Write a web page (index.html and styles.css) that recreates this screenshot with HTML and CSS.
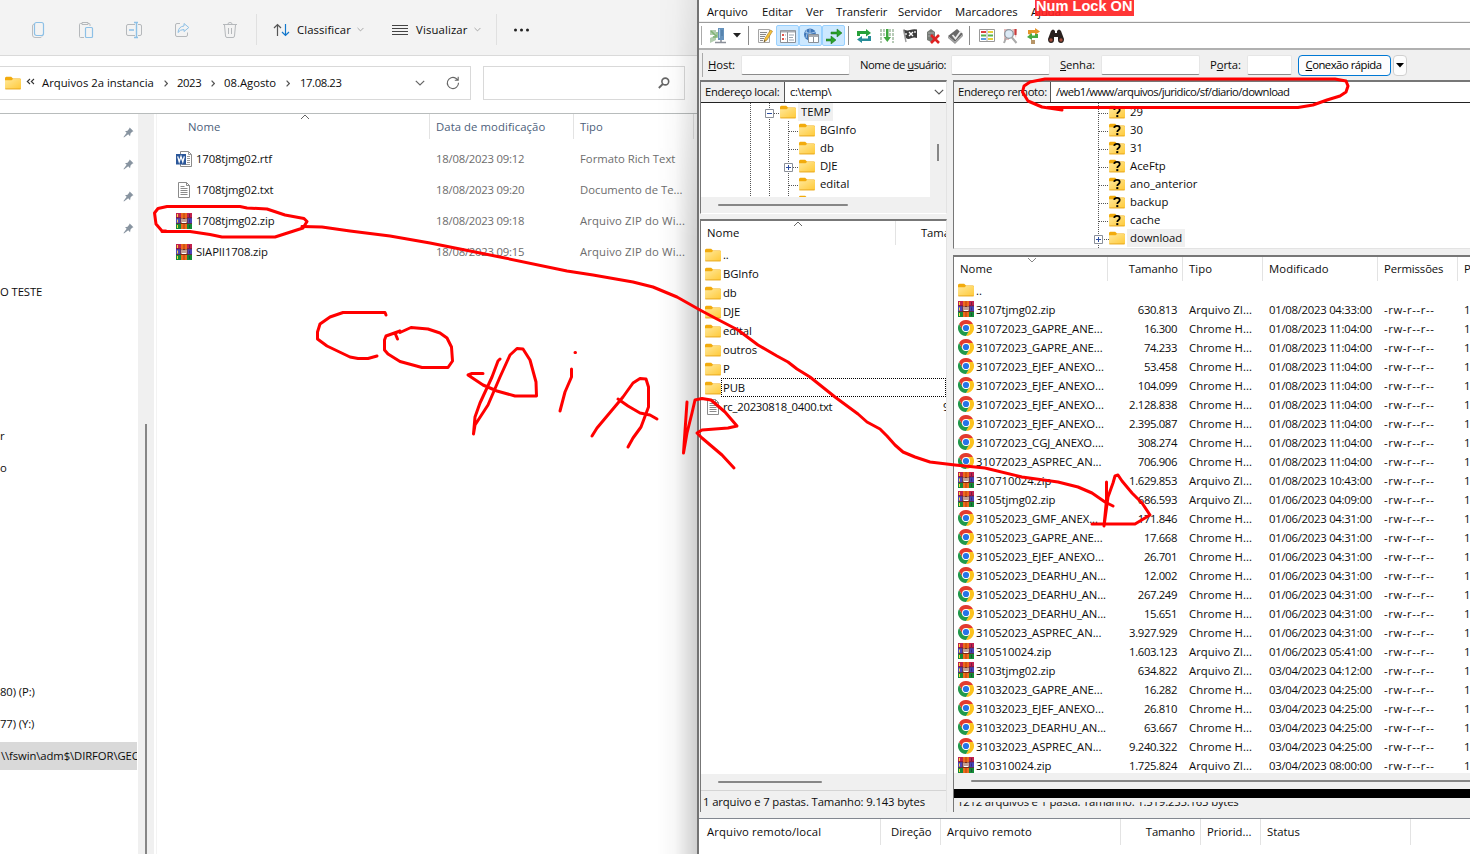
FILE: index.html
```
<!DOCTYPE html>
<html lang="pt-BR">
<head>
<meta charset="utf-8">
<title>Arquivos</title>
<link rel="stylesheet" href="styles.css">
</head>
<body>
<svg class="defs" width="0" height="0">
  <defs>
    <linearGradient id="gold" x1="0" y1="0" x2="1" y2="1"><stop offset="0" stop-color="#ffe89a"/><stop offset="1" stop-color="#ffc937"/></linearGradient>
  </defs>
  <symbol id="folder" viewBox="0 0 16 14"><path d="M0 2.2Q0 .7 1.3.7h4.9L8 2.5h6.8Q16 2.5 16 3.7V8H0z" fill="#f2ab0d"/><path d="M0 4.3h6.6L8 3h7q1 0 1 1v8.3q0 1-1 1H1q-1 0-1-1z" fill="url(#gold)"/><path d="M.3 12.9h15.4" stroke="#e3a21a" stroke-width=".8"/></symbol>
  <symbol id="qfolder" viewBox="0 0 16 14"><use href="#folder"/><path d="M5.2 4.9Q5.4 2.9 8 2.9q2.7 0 2.7 2.2Q10.700 6.400 9.300 7.200Q8.300 7.800 8.300 9" fill="none" stroke="#000" stroke-width="1.800"/><rect x="7.300" y="10.100" width="2" height="2"/></symbol>
  <symbol id="zip" viewBox="0 0 16 16"><path fill="#c2214d" d="M0 0h16v5H0z"/><path fill="#4a44b8" d="M0 5h16v5.500H0z"/><path fill="#148a36" d="M0 10.500h16V16H0z"/><path fill="#5e1230" d="M0 4.500h16v.8H0zM0 10h16v.8H0z"/><path fill="#ee6a1c" d="M5 0h6v16H5z"/><path fill="#b5400c" d="M7.500 0h1v16h-1z"/><path fill="#7c2b12" d="M4.500 5h7v6h-7z"/><path d="M6 5.500v4h4v-4M8 6v3.500" stroke="#fff" fill="none" stroke-width="1.100"/><path d="M1.500 1v3M1.500 6.500v3M1.500 12v3" stroke="#f7d73e"/><path d="M13.500 1v3M13.500 6.500v3M13.500 12v3" stroke="#242038" opacity=".5"/></symbol>
  <symbol id="chrome" viewBox="0 0 16 16"><path d="M1.070 4A8 8 0 0 1 14.930 4H8z" fill="#e33b2e"/><path d="M14.930 4A8 8 0 0 1 8 16L11.460 10 8 4z" fill="#fcc31e"/><path d="M1.070 4 4.540 10 8 8l0-4z" fill="#e33b2e"/><path d="M1.070 4 4.540 10 8 12 11 11 8 16A8 8 0 0 1 1.070 4z" fill="#219a4b"/><circle cx="8" cy="8" r="4" fill="#fff"/><circle cx="8" cy="8" r="3.100" fill="#2474e8"/></symbol>
  <symbol id="txt" viewBox="0 0 16 16"><path d="M2.500.5h8l3 3v12h-11z" fill="#fff" stroke="#8b8b8b"/><path d="M10.500.5v3h3M4.500 4.500h4M4.500 6.500h7M4.500 8.500h7M4.500 10.500h7M4.500 12.500h7" fill="none" stroke="#8b8b8b"/></symbol>
  <symbol id="word" viewBox="0 0 16 16"><path d="M4.500.5h8l3 3v12h-11z" fill="#fff" stroke="#8b8b8b"/><path d="M12.500.5v3h3M11 5.500h3M11 7.500h3M11 9.500h3M11 11.500h3M6 13.500h8" fill="none" stroke="#9a9a9a"/><path d="M0 3h10v10.500H0z" fill="#2b579a"/><path d="m1.700 5.300 1.500 5.500L5 5.500l1.800 5.300L8.300 5.300" stroke="#fff" stroke-width="1.300" fill="none"/></symbol>
  <symbol id="pin" viewBox="0 0 12 12"><path d="M7.300.6 11.400 4.700 10 5.300 8.200 7.200 7.700 10 5.700 8 1 11.500.6 11 4 6.400 2.200 4.500 5 4 6.700 2z" fill="#8894a0"/></symbol>
  <symbol id="chev" viewBox="0 0 10 6"><path d="M.8.8 5 5 9.200.8" fill="none" stroke="currentColor" stroke-width="1.200"/></symbol>
  <symbol id="crumb" viewBox="0 0 4 7"><path d="M.6.6 3.300 3.500.6 6.400" fill="none" stroke="#555" stroke-width="1.200"/></symbol>
</svg>

<div class="desktop">
  <section class="explorer">
    <div class="ribbon">
      <div class="ribbon-icons">
        <svg width="18" height="18" viewBox="0 0 18 18" fill="none"><path d="M4 3Q2.500 3.500 2.500 5v9q0 2.500 2.500 2.500h5q1.500 0 2-1" stroke="#b9bcc0"/><rect x="4.500" y="1.500" width="9" height="13" rx="2" stroke="#8dc0e6" stroke-width="1.200"/></svg>
        <svg width="18" height="18" viewBox="0 0 18 18" fill="none"><path d="M7 16.500H3.500q-1 0-1-1v-12q0-1 1-1H5m6 0h1q1 0 1 1V5M5 1.500h6v2H5z" stroke="#b5b8bb"/><rect x="8.500" y="6.500" width="7" height="10" rx="1" stroke="#8dc0e6" stroke-width="1.200"/></svg>
        <svg width="18" height="18" viewBox="0 0 18 18" fill="none"><path d="M10 3.500H3Q1.500 3.500 1.500 5v8q0 1.500 1.500 1.500h7m3-11h2q1.500 0 1.500 1.500v8q0 1.500-1.500 1.500h-2" stroke="#b5b8bb"/><path d="M9 1.500h4M9 16.500h4M11.500 1.500v15M4 9h5" stroke="#8dc0e6" stroke-width="1.400"/></svg>
        <svg width="18" height="18" viewBox="0 0 18 18" fill="none"><path d="M7 2.500H4Q2.500 2.500 2.500 4v10q0 1.500 1.500 1.500h9q1.500 0 1.500-1.500v-2.500" stroke="#b5b8bb"/><path d="M11 2.500 15.800 6.500 11 10.500V8.500Q7 8.500 5 11.500 5.500 5.500 11 5z" stroke="#8dc0e6"/></svg>
        <svg width="18" height="18" viewBox="0 0 18 18" fill="none" stroke="#b5b8bb"><path d="M2 3.500h14M7 3q0-1.500 2-1.500T11 3M3.500 4l1 11q.2 1.500 1.500 1.500h6q1.300 0 1.500-1.500l1-11M7.500 7v6M10.500 7v6"/></svg>
      </div>
      <div class="ribbon-sort">
        <svg width="17" height="14" viewBox="0 0 17 14" fill="none" stroke-width="1.200"><path d="M1 5 4.500 1.500 8 5M4.500 1.500V13" stroke="#555"/><path d="M9 9l3.500 3.500L16 9M12.500 1v11.500" stroke="#1277cc"/></svg>
        <span>Classificar</span><svg class="dim" width="7" height="5"><use href="#chev"/></svg>
      </div>
      <div class="ribbon-view">
        <svg width="16" height="12" stroke="#444"><path d="M0 1.500h16M0 4.500h16M0 7.500h16M0 10.500h16"/></svg>
        <span>Visualizar</span><svg class="dim" width="7" height="5"><use href="#chev"/></svg>
      </div>
      <div class="ribbon-more"><svg width="18" height="4" fill="#222"><circle cx="2.500" cy="2" r="1.500"/><circle cx="8.500" cy="2" r="1.500"/><circle cx="14.500" cy="2" r="1.500"/></svg></div>
    </div>
    <div class="locbar">
      <div class="crumbs">
        <svg width="16" height="14"><use href="#folder"/></svg>
        <svg class="back" width="9" height="7" fill="none" stroke="#333" stroke-width="1.100"><path d="M4 1 1.300 3.500 4 6M8 1 5.300 3.500 8 6"/></svg>
        <span class="c1">Arquivos 2a instancia</span><svg width="4" height="7"><use href="#crumb"/></svg>
        <span class="c2">2023</span><svg width="4" height="7"><use href="#crumb"/></svg>
        <span class="c3">08.Agosto</span><svg width="4" height="7"><use href="#crumb"/></svg>
        <span class="c4">17.08.23</span>
        <svg class="drop" width="10" height="6"><use href="#chev"/></svg>
        <svg width="14" height="14" fill="none" stroke="#666" stroke-width="1.100"><path d="M12.500 6.800A5.600 5.600 0 1 1 9.800 2.200L12 4M12.200.8V4.200H8.800"/></svg>
      </div>
      <div class="search"><svg width="12" height="12" fill="none" stroke="#666"><circle cx="7.300" cy="4.500" r="3.400" stroke-width="1.600"/><path d="M4.800 7 .8 11" stroke-width="1.800"/></svg></div>
    </div>
    <div class="exp-body">
      <nav class="nav">
        <div class="pins"><svg width="11" height="11"><use href="#pin"/></svg><svg width="11" height="11"><use href="#pin"/></svg><svg width="11" height="11"><use href="#pin"/></svg><svg width="11" height="11"><use href="#pin"/></svg></div>
        <div class="nav-item n1">O TESTE</div>
        <div class="nav-item n2">r</div>
        <div class="nav-item n3">o</div>
        <div class="nav-item n4">80) (P:)</div>
        <div class="nav-item n5">77) (Y:)</div>
        <div class="nav-item n6">\\fswin\adm$\DIRFOR\GEOPE</div>
      </nav>
      <div class="nav-scroll"><i></i></div>
      <div class="files">
        <div class="frow fhead"><span>Nome</span><span>Data de modificação</span><span>Tipo</span><svg class="sort" width="10" height="6"><path d="M1 5 5 1 9 5" fill="none" stroke="#666"/></svg></div>
        <div class="frow"><span><svg width="16" height="16"><use href="#word"/></svg>1708tjmg02.rtf</span><span>18/08/2023 09:12</span><span>Formato Rich Text</span></div>
        <div class="frow"><span><svg width="16" height="16"><use href="#txt"/></svg>1708tjmg02.txt</span><span>18/08/2023 09:20</span><span>Documento de Te...</span></div>
        <div class="frow"><span><svg width="16" height="16"><use href="#zip"/></svg>1708tjmg02.zip</span><span>18/08/2023 09:18</span><span class="wide">Arquivo ZIP do Wi...</span></div>
        <div class="frow"><span><svg width="16" height="16"><use href="#zip"/></svg>SIAPII1708.zip</span><span>18/08/2023 09:15</span><span class="wide">Arquivo ZIP do Wi...</span></div>
      </div>
    </div>
    <div class="edge-shade"></div>
  </section>

  <section class="fz">
    <div class="menu"><span class="m1">Arquivo</span><span class="m2">Editar</span><span class="m3">Ver</span><span class="m4">Transferir</span><span class="m5">Servidor</span><span class="m6">Marcadores</span><span class="m7">Ajuda</span></div>
    <div class="tools">
      <i class="sep grip"></i>
      <svg class="server" width="18" height="18"><path d="M1 3h6v5H1zM1 11l6-3v5l-6 3z" fill="#b3cdb0"/><path d="m2 4 5 5M8 5v5H4" stroke="#7fb374" fill="none" stroke-width="1.500"/><path d="M9 1h6v12H9z" fill="#6693bd"/><path d="M10.500 2v9" stroke="#a9c8e3"/><path d="M13 3v6" stroke="#46749f"/><path d="M6 15.500h11M12 13v2" stroke="#8a8f98" stroke-width="1.600"/></svg>
      <svg class="caret" width="8" height="5"><path d="M0 0h8L4 4.500z" fill="#222"/></svg>
      <i class="sep s1"></i>
      <span class="tool"><svg width="16" height="16"><path d="M1.500 1.500h11v13h-11z" fill="#fafafa" stroke="#a5a5a5"/><path d="M3 4.500h7M3 6.500h6M3 8.500h5M3 10.500h4M3 12.500h3" stroke="#888"/><path d="m7 14 .8-3.500L13.500 2l2 1.300L10 12z" fill="#f5c23a" stroke="#a8781e" stroke-width=".6"/><path d="m7 14 .5-2 1 .7z" fill="#333"/></svg></span>
      <span class="tool on"><svg width="16" height="16"><path d="M.5 2.500h15v12H.5z" fill="#fff" stroke="#8a9097"/><path d="M1 3.500h14" stroke="#a7acb2" stroke-width="2"/><path d="M7.500 4v10" stroke="#8a9097"/><path d="M2 7h2M2 11h2" stroke="#e0564a" stroke-width="2"/><path d="M5 7h1M5 11h1M9 7h5M9 9.500h4M9 12h5" stroke="#9aa5b0"/></svg></span>
      <span class="tool on"><svg width="16" height="16"><circle cx="7" cy="6.500" r="6" fill="#3f77ba"/><path d="M2 4q5 3 10 0M7 1v6M3 2q2 3 0 8" stroke="#a3c4e6" fill="none"/><path d="M5.500 6.500h10v8h-10z" fill="#fff" stroke="#8a9097"/><path d="M6 8h9" stroke="#a7acb2" stroke-width="2"/><path d="M10.500 9v5" stroke="#8a9097"/></svg></span>
      <span class="tool on"><svg width="16" height="16"><path d="M5 4h6V1l5 4-5 4V6H5zM0 11h5V8l5 4-5 4v-3H0z" fill="#2ba32b" stroke="#186d1a" stroke-width=".5"/></svg></span>
      <i class="sep s2"></i>
      <span class="tool"><svg width="16" height="16"><path d="M1 8V3h9V1l5 4-5 3.500V6H4v2z" fill="#27a03a"/><path d="M15 8v5H6v2l-5-3.500L6 8v2.500h6V8z" fill="#268c98"/></svg></span>
      <span class="tool"><svg width="16" height="16"><path d="M2 1v14M5 1v8M11 1v8M14 1v14" stroke="#b7cbb7" stroke-width="2" stroke-dasharray="3 1"/><path d="M7 1h2.500v8H12l-3.700 5L4.500 9H7z" fill="#40a840"/></svg></span>
      <span class="tool"><svg width="16" height="16"><path d="M1.500 1.500 4 14" stroke="#999" stroke-width="1.400"/><path d="M2 1.500q3 1.500 6 .5t7-.5V10q-3-1-6 .3T4 10z" fill="#3c3c3c"/><path d="m7 4 4 4m0-4L7 8" stroke="#fff" stroke-width="1.400"/><path d="M13 3v2M4 5v2" stroke="#ddd" stroke-width="1.500"/></svg></span>
      <span class="tool"><svg width="16" height="16"><path d="M2 4 6 1l4 3v9l-4 1-4-2z" fill="#767b76"/><path d="M3 5h6M3 8h6" stroke="#aaa"/><path d="m6 7 8 8m0-8-8 8" stroke="#df2222" stroke-width="2.600"/></svg></span>
      <span class="tool"><svg width="16" height="16"><path d="M0 8 9 1l6 5-8 8z" fill="#686868"/><path d="m0 8 7 6 8-8v2l-8 8-7-6z" fill="#9b9b9b"/><path d="m4.500 7 3 3.500L13 3" stroke="#e9e9e9" stroke-width="1.800" fill="none"/></svg></span>
      <i class="sep s3"></i>
      <span class="tool"><svg width="16" height="16"><path d="M.5 1.500h15v12H.5z" fill="#fff" stroke="#999"/><path d="M2 4h5" stroke="#df4040" stroke-width="2"/><path d="M2 7.500h5M9 7.500h5" stroke="#58b04e" stroke-width="2"/><path d="M2 11h5" stroke="#5c9de0" stroke-width="2"/><path d="M9 4h5M9 11h5" stroke="#e5cf38" stroke-width="2"/><path d="M8 2v11" stroke="#aaa"/></svg></span>
      <span class="tool"><svg width="16" height="16"><path d="M2 1h5v11H2zM10 1h5l-1 9z" fill="#e6bcbc"/><circle cx="7" cy="6" r="4.300" fill="#dce9f5" stroke="#8d979f" stroke-width="1.300"/><path d="m9.500 9 5 6M4 10l-2 5" stroke="#aaa" stroke-width="2"/><path d="M13.500 1v6" stroke="#c93a3a" stroke-width="2"/></svg></span>
      <span class="tool"><svg width="16" height="16"><path d="M3 6V2h7V0l5 3.500L10 7V5H6v2z" fill="#e59429"/><path d="M13 6v4H7v2L2 9l5-4v2.500h3V6z" fill="#48aa42"/><path d="M6 12h4v4H6z" fill="#b79568"/></svg></span>
      <span class="tool"><svg width="16" height="16"><path d="M3 3q2-3 4 0v2h2V3q2-3 4 0l3 8q0 4-3 4t-3-3V9H6v3q0 3-3 3t-3-4z" fill="#29211f"/><circle cx="3" cy="12" r="1.700" fill="#a34c3a"/><circle cx="13" cy="12" r="1.700" fill="#a34c3a"/></svg></span>
    </div>
    <div class="quick">
      <i class="sep"></i>
      <label class="q1"><u>H</u>ost:</label><i class="inp i1"></i>
      <label class="q2">Nome de <u>u</u>suário:</label><i class="inp i2"></i>
      <label class="q3"><u>S</u>enha:</label><i class="inp i3"></i>
      <label class="q4">P<u>o</u>rta:</label><i class="inp i4"></i>
      <button class="connect"><u>C</u>onexão rápida</button><button class="arrow"><svg width="8" height="5"><path d="M0 0h8L4 4.500z"/></svg></button>
    </div>
    <div class="panes">
      <div class="side local">
        <div class="box tree-box">
          <div class="addr"><span class="lab">Endereço local:</span><span class="path">c:\temp\</span><svg width="10" height="6"><use href="#chev"/></svg></div>
          <div class="tree" id="local-tree">
            <svg class="guides" width="230" height="93" fill="none" stroke="#555" stroke-dasharray="1 1"><path d="M49.500 0v93M68.500 0v93M87.500 18v75M73 10.500h7M88 28.500h10M88 46.500h10M88 64.500h10M88 82.500h10"/><g stroke-dasharray="none" stroke="#8a8f98"><path fill="#fff" d="M64.500 6.500h8v8h-8zM83.500 60.500h8v8h-8z"/><path stroke="#2b4ca0" d="M66 10.500h5M85 64.500h5M87.500 62v5"/></g></svg>
          </div>
          <div class="vscroll"><i></i></div>
          <div class="hscroll"><i></i></div>
        </div>
        <div class="box list-box">
          <div class="lhead"><span>Nome</span><span>Tamanho</span><svg class="sort" width="10" height="6"><path d="M1 5 5 1 9 5" fill="none" stroke="#666"/></svg></div>
          <div class="llist" id="local-list"></div>
          <div class="hscroll"><i></i></div>
          <div class="status">1 arquivo e 7 pastas. Tamanho: 9.143 bytes</div>
        </div>
      </div>
      <div class="side remote">
        <div class="box tree-box">
          <div class="addr"><span class="lab">Endereço remoto:</span><span class="path">/web1/www/arquivos/juridico/sf/diario/download</span></div>
          <div class="tree" id="remote-tree">
            <svg class="guides" width="230" height="145" fill="none" stroke="#555" stroke-dasharray="1 1"><path d="M144.500 0v145M145 10.500h10M145 28.500h10M145 46.500h10M145 64.500h10M145 82.500h10M145 100.500h10M145 118.500h10M150 136.500h6"/><g stroke-dasharray="none" stroke="#8a8f98"><path fill="#fff" d="M140.500 132.500h8v8h-8z"/><path stroke="#2b4ca0" d="M142 136.500h5M144.500 134v5"/></g></svg>
          </div>
        </div>
        <div class="box list-box">
          <div class="rrow rhead"><span>Nome</span><span>Tamanho</span><span>Tipo</span><span>Modificado</span><span>Permissões</span><span>P</span><svg class="sort" width="10" height="6"><path d="M1 1 5 5 9 1" fill="none" stroke="#888"/></svg></div>
          <div id="remote-list" class="rlist"></div>
          <div class="hscroll"><i></i></div>
          <div class="blackbar"></div>
          <div class="status"><span>1212 arquivos e 1 pasta. Tamanho: 1.519.255.165 bytes</span></div>
        </div>
      </div>
    </div>
    <div class="queue"><span>Arquivo remoto/local</span><span>Direção</span><span>Arquivo remoto</span><span>Tamanho</span><span>Priorid...</span><span>Status</span></div>
  </section>
  <div class="numlock">Num Lock ON</div>
  <svg class="ink" width="1470" height="854" viewBox="0 0 1470 854">
    <path d="M166 231H162L156 224 154.500 213 158 208.500 167 206.500H240L247 208 267 209 285 215 304 218.500 307 221.500 303 228 275 237H222L210 234.500 190 231.500H162"/>
    <path d="M302 226.500 322 227 350 231 390 236 430 243 500 257 567 271 593 275 633 282 653 287 677 297 700 310 715 318 738 330 758 345 777 356 788 362 797 369 810 377 835 397 858 414 867 422 880 429 887 436 895 445 903 452 915 457 930 462 955 465 985 468 1022 477 1058 482 1078 487 1092 493 1105 502 1113 506"/>
    <path d="M1106.500 482V500L1104 526 1108 497 1113 483 1115 476 1118 475 1122 481 1132 493 1142 503 1150 515 1135 524H1092"/>
    <path d="M386 315 385 312.500H343L330 317 320 324 317.500 332V339L327 346 350 357 358 358.500H368L377 356"/>
    <path d="M397.500 339 395 333 400 331 386 336 384.500 340V350L388 354 400 361.500 422 367.500H448L452.500 361 451.500 347 447 338 440 333 428 329 411 327.500 400 332.500"/>
    <path d="M500 359 498 361 492 377 480 403 475 417 473.500 434 475 425 488 405 500 377 510 355 517 348.500 523 349 530 360 536 382 536.500 396H515L497 391 483 385 468 375 472 373.500H483"/>
    <path d="M575 352.500h.5M571.500 369V377L565 392 560 411M592 436 597 428 623 397 633 383 640 378.500 646 379 648.500 387V407L641 427 633 438 628 447M618 399 628 406 640 413 650 415 657 419M687 402 683.500 453 687 433 692 413 695 400 702 398.500 711 400 725 412 737 426 728 428 702 430 697 433 702 438 722 455 734 468"/>
    <path d="M1062 110 1042 107 1028 101 1022.500 92 1024 86 1030 82 1045 79H1335L1346 81 1348 86 1346 92 1340 96 1327 100 1313 105 1298 107.500H1048"/>
  </svg>
</div>
<script src="lists.js"></script>
</body>
</html>
```
FILE: styles.css
```
* { box-sizing: border-box; }
body { margin: 0; font: 11.3px/18px "Open Sans", "Noto Sans", sans-serif; color: #0c0c0c; overflow: hidden; }
svg { display: block; flex: none; }
span, label { white-space: nowrap; }
.defs { position: absolute; }
.desktop { position: relative; display: flex; width: 1470px; height: 854px; overflow: hidden; }

/* Explorer window */
.explorer { position: relative; width: 697px; flex: none; background: #fff; display: flex; flex-direction: column; overflow: hidden; }
.ribbon { height: 56px; background: #f3f3f3; border-bottom: 1px solid #dadada; display: flex; align-items: center; padding: 4px 0 0 30px; }
.ribbon-icons { display: flex; gap: 30px; width: 227px; height: 31px; align-items: center; border-right: 1px solid #e0e0e0; }
.ribbon-icons svg:first-child { margin-right: -1px; }
.ribbon-sort, .ribbon-view { display: flex; align-items: center; }
.ribbon-sort { padding-left: 16px; width: 135px; }
.ribbon-sort span { margin-left: 7px; width: 60px; letter-spacing: .1px; }
.ribbon-view { width: 105px; height: 31px; border-right: 1px solid #e0e0e0; }
.ribbon-view span { margin-left: 8px; width: 58px; letter-spacing: .15px; }
.dim { color: #999; }
.ribbon-more { margin-left: 16px; }
.locbar { height: 58px; padding-top: 10px; display: flex; gap: 12px; border-bottom: 1px solid #b8bcbc; }
.crumbs { width: 471px; height: 34px; border: 1px solid #d9d9d9; border-left: 0; display: flex; align-items: center; padding-left: 5px; }
.crumbs .back { margin: 0 7px 3px 5px; }
.c1 { width: 122px; }
.c2 { width: 34px; margin-left: 9px; letter-spacing: -.4px; }
.c3 { width: 62px; margin-left: 9px; }
.c4 { width: 115px; margin-left: 10px; letter-spacing: -.4px; }
.drop { margin-right: 21px; color: #666; }
.search { width: 202px; height: 34px; border: 1px solid #d9d9d9; display: flex; align-items: center; justify-content: flex-end; padding-right: 14px; }
.exp-body { flex: 1; display: flex; }
.nav { width: 138px; position: relative; letter-spacing: -.1px; }
.pins { display: flex; flex-direction: column; gap: 21px; padding: 13px 0 0 123px; height: 160px; }
.nav-item { height: 28px; line-height: 28px; width: 137px; overflow: hidden; white-space: nowrap; }
.n1 { margin-top: 4px; }
.n2 { margin-top: 116px; }
.n3 { margin-top: 4px; }
.n4 { margin-top: 196px; }
.n5, .n6 { margin-top: 4px; }
.n6 { background: #d9d9d9; padding-left: 1px; }
.nav-scroll { width: 19px; background: linear-gradient(90deg, #f0f0f0 16px, #fff 16px, #fff 18px, #f3f3f3 18px); padding: 310px 0 0 7px; }
.nav-scroll i { display: block; width: 2px; height: 430px; background: #868686; }
.files { flex: 1; }
.frow { display: grid; grid-template-columns: 272px 144px 1fr; height: 31px; align-items: center; }
.frow span { color: #6d6d6d; padding-left: 7px; letter-spacing: -.22px; }
.frow span:first-child { color: #111; display: flex; align-items: center; gap: 4px; padding-left: 19px; letter-spacing: -.12px; }
.frow span:nth-child(3) { letter-spacing: 0; }
.frow span.wide { letter-spacing: .15px; }
.frow.fhead { height: 25px; margin-bottom: 4px; position: relative; grid-template-columns: 273px 144px 120px; }
.fhead span, .frow.fhead span:first-child { color: #4c607a; height: 25px; line-height: 26px; border-right: 1px solid #e3e3e3; letter-spacing: .1px; padding-left: 6px; }
.frow.fhead span:nth-child(2) { letter-spacing: .08px; }
.frow.fhead span:first-child { padding-left: 31px; }
.sort { position: absolute; top: 0; }
.fhead .sort { left: 143px; }
.edge-shade { position: absolute; right: 0; top: 0; bottom: 0; width: 40px; background: linear-gradient(90deg, rgba(0,0,0,0), rgba(0,0,0,.03) 45%, rgba(0,0,0,.19)); -webkit-mask-image: linear-gradient(rgba(0,0,0,.35), #000 240px); mask-image: linear-gradient(rgba(0,0,0,.35), #000 240px); }

/* FTP client window */
.fz { flex: 1; background: #f0f0f0; border-left: 2px solid #737373; display: flex; flex-direction: column; overflow: hidden; }
.fz > div { flex: none; }
.menu { height: 21px; background: #fff; display: flex; padding: 2px 0 0 8px; line-height: 20px; }
.m1 { width: 55px; } .m2 { width: 44px; } .m3 { width: 30px; } .m4 { width: 62px; } .m5 { width: 57px; } .m6 { width: 76px; }
.menu span { letter-spacing: -.02px; }
.tools { height: 28px; margin-top: 1px; background: #fff; border-top: 1px solid #9c9c9c; border-bottom: 2px solid #b0b0b0; display: flex; align-items: center; }
.sep { width: 1px; height: 19px; background: #8b8b8b; flex: none; }
.grip { margin-left: 2px; background: #aaa; }
.server { margin-left: 7px; }
.caret { margin-left: 6px; }
.s1 { margin: 0 4px 0 7px; }
.s2 { margin: 0 3px 0 3px; }
.s3 { margin: 0 5px 0 2px; }
.tool { width: 23px; height: 21px; display: flex; align-items: center; justify-content: center; flex: none; }
.tool.on { background: #cce8ff; border: 1px solid #99d1ff; border-radius: 2px; }
.quick { height: 30px; display: flex; align-items: center; padding-left: 3px; }
.quick .sep { height: 24px; background: #aaa; }
.inp { height: 20px; background: #fff; border: 1px solid #e6e6e6; border-bottom-color: #8b8b8b; border-radius: 2px; flex: none; }
.q1 { margin-left: 5px; width: 33px; } .i1 { width: 109px; }
.q2 { margin-left: 10px; width: 91px; } .i2 { width: 99px; }
.q3 { margin-left: 10px; width: 41px; } .i3 { width: 99px; }
.q4 { margin-left: 10px; width: 37px; } .i4 { width: 45px; }
.quick label { flex: none; letter-spacing: -.12px; }
.quick .q2 { letter-spacing: -.5px; }
.quick button { font: inherit; color: #000; background: #fdfdfd; height: 21px; padding: 0; border: 1px solid #d0d0d0; border-radius: 4px; display: flex; align-items: center; justify-content: center; white-space: pre; }
.quick .connect { width: 93px; margin-left: 6px; border-color: #0078d4; letter-spacing: -.5px; padding-right: 2px; }
.quick .arrow { width: 14px; margin-left: 2px; }
.panes { height: 732px; display: flex; gap: 6px; padding-left: 1px; }
.side { display: flex; flex-direction: column; flex: none; overflow: hidden; }
.local { width: 247px; }
.remote { width: 518px; }
.box { border-top: 2px solid #777; border-left: 1px solid #777; border-right: 1px solid #e3e3e3; position: relative; overflow: hidden; }
.addr { height: 21px; background: #fff; border-bottom: 1px solid #222; display: flex; align-items: center; }
.lab { background: #f0f0f0; border-right: 1px solid #555; height: 20px; line-height: 20px; padding-left: 4px; width: 84px; letter-spacing: -.36px; }
.path { padding-left: 5px; flex: 1; letter-spacing: -.4px; }
.addr svg { margin-right: 2px; color: #555; }
.local .tree-box { height: 134px; display: grid; grid-template: 21px 94px 1fr / 229px 1fr; margin-bottom: 5px; border-bottom: 1px solid #fff; }
.local .addr { grid-column: 1 / 3; }
.tree { position: relative; background: #fff; overflow: hidden; }
.guides { position: absolute; left: 0; top: 0; }
.titem { height: 18px; display: flex; align-items: center; position: relative; }
.titem span { padding: 0 3px; margin-left: 2px; }
.titem.sel span { background: #f0f0f0; }
.vscroll i { display: block; width: 2px; height: 17px; margin: 41px 0 0 7px; background: #868686; }
.local .tree-box .hscroll { grid-column: 1 / 3; }
.hscroll { height: 16px; padding: 7px 0 0 17px; background: #f0f0f0; }
.hscroll i { display: block; height: 2px; width: 130px; background: #868686; border-radius: 1px; }
.local .list-box { flex: 1; display: flex; flex-direction: column; }
.lhead { height: 24px; background: #fff; display: flex; position: relative; line-height: 23px; flex: none; }
.lhead span { width: 195px; padding-left: 6px; border-right: 1px solid #e3e3e3; flex: none; letter-spacing: .1px; }
.lhead span + span { padding-left: 25px; letter-spacing: -.1px; }
.lhead .sort { left: 92px; }
.llist { background: #fff; flex: 1; }
.lrow { height: 19px; display: flex; align-items: center; padding-left: 4px; }
.lrow span { flex: 1; padding: 1px 0 0 2px; line-height: 18px; letter-spacing: -.1px; }
.lrow:last-child span { letter-spacing: -.25px; }
.lrow.focus span { outline: 1px dotted #000; outline-offset: -1px; }
.lrow b { font-weight: 400; width: 3px; overflow: hidden; padding-top: 1px; }
.list-box .hscroll { flex: none; }
.local .list-box .hscroll i { width: 104px; }
.status { height: 22px; border-top: 1px solid #d4d4d4; padding: 2px 0 0 2px; flex: none; white-space: nowrap; letter-spacing: -.12px; }
.remote .tree-box { height: 169px; margin-bottom: 6px; background: #fff; border-bottom: 1px solid #e3e3e3; }
.remote .lab { width: 97px; }
.remote .path { letter-spacing: -.58px; }
.remote .tree { height: 145px; }
.remote .list-box { flex: 1; background: #fff; }
.rlist { height: 492px; overflow: hidden; }
.rrow { height: 19px; display: grid; grid-template-columns: 154px 75px 80px 115px 80px 20px; align-items: center; width: 524px; }
.rrow span { padding: 1px 0 0 6px; letter-spacing: -.25px; }
.rrow span:first-child { display: flex; align-items: center; gap: 2px; padding-left: 4px; letter-spacing: -.06px; }
.rlist svg { margin-top: -2px; }
.rrow span:nth-child(2) { text-align: right; padding-right: 6px; letter-spacing: -.36px; }
.rrow span:nth-child(3) { letter-spacing: .05px; }
.rrow span:nth-child(5) { letter-spacing: .6px; }
.rrow.rhead { height: 24px; position: relative; }
.rrow.rhead span { height: 24px; line-height: 23px; padding-top: 0; border-right: 1px solid #e3e3e3; letter-spacing: .1px; }
.rrow.rhead span:nth-child(2) { padding-right: 4px; letter-spacing: -.1px; }
.rrow.rhead span:nth-child(5) { letter-spacing: -.1px; }
.rrow.rhead span:first-child { display: block; padding-left: 6px; }
.rhead .sort { left: 73px; }
.remote .hscroll i { width: 520px; }
.blackbar { height: 9px; background: #000; }
.remote .status { background: #f0f0f0; height: 14px; padding: 4px 0 0 3px; border: 0; letter-spacing: -.18px; }
.remote .status span { display: block; height: 10px; overflow: hidden; line-height: 0; }
.queue { margin-top: 6px; height: 36px; background: #fff; border-top: 1px solid #828790; display: flex; }
.queue span { height: 26px; line-height: 25px; border-right: 1px solid #e3e3e3; padding: 0 6px 0 8px; width: 182px; flex: none; letter-spacing: .15px; }
.queue span:nth-child(2) { width: 60px; padding: 0 9px 0 10px; letter-spacing: 0; }
.queue span:nth-child(3) { width: 180px; padding-left: 6px; }
.queue span:nth-child(4) { width: 80px; text-align: right; padding-right: 5px; letter-spacing: -.1px; }
.queue span:nth-child(5) { width: 60px; padding: 0 6px; letter-spacing: 0; }
.queue span:nth-child(6) { width: 150px; padding-left: 6px; letter-spacing: 0; }

/* Overlays */
.numlock { position: absolute; left: 1035px; top: 0; width: 99px; height: 16px; background: rgba(255,32,32,.9); color: #fff; font: bold 14.6px/12px "Liberation Sans", sans-serif; padding-left: 1px; white-space: nowrap; }
.ink { position: absolute; left: 0; top: 0; fill: none; stroke: #f00; stroke-width: 3; stroke-linecap: round; stroke-linejoin: round; }
```
FILE: lists.js
```
const icon = (name, h = 16) => `<svg width="16" height="${h}"><use href="#${name}"/></svg>`;

const tree = (id, items) => {
  document.getElementById(id).insertAdjacentHTML('beforeend', items.map(([name, pad, ic, sel]) =>
    `<div class="titem${sel ? ' sel' : ''}" style="padding-left:${pad}px">${icon(ic, 14)}<span>${name}</span></div>`).join(''));
};

tree('local-tree', [
  ['TEMP', 79, 'folder', true], ['BGInfo', 98, 'folder'], ['db', 98, 'folder'],
  ['DJE', 98, 'folder'], ['edital', 98, 'folder'], ['', 98, 'folder']
]);
tree('remote-tree', [
  ['29', 155, 'qfolder'], ['30', 155, 'qfolder'], ['31', 155, 'qfolder'], ['AceFtp', 155, 'qfolder'],
  ['ano_anterior', 155, 'qfolder'], ['backup', 155, 'qfolder'], ['cache', 155, 'qfolder'], ['download', 155, 'folder', true]
]);

document.getElementById('local-list').innerHTML =
  ['..', 'BGInfo', 'db', 'DJE', 'edital', 'outros', 'P', 'PUB'].map(n =>
    `<div class="lrow${n === 'PUB' ? ' focus' : ''}">${icon('folder', 14)}<span>${n}</span></div>`).join('') +
  `<div class="lrow">${icon('txt')}<span>rc_20230818_0400.txt</span><b>9</b></div>`;

const remote = [
  ['3107tjmg02.zip', '630.813', '01/08/2023 04:33:00'],
  ['31072023_GAPRE_ANE...', '16.300', '01/08/2023 11:04:00'],
  ['31072023_GAPRE_ANE...', '74.233', '01/08/2023 11:04:00'],
  ['31072023_EJEF_ANEXO...', '53.458', '01/08/2023 11:04:00'],
  ['31072023_EJEF_ANEXO...', '104.099', '01/08/2023 11:04:00'],
  ['31072023_EJEF_ANEXO...', '2.128.838', '01/08/2023 11:04:00'],
  ['31072023_EJEF_ANEXO...', '2.395.087', '01/08/2023 11:04:00'],
  ['31072023_CGJ_ANEXO....', '308.274', '01/08/2023 11:04:00'],
  ['31072023_ASPREC_AN...', '706.906', '01/08/2023 11:04:00'],
  ['310710024.zip', '1.629.853', '01/08/2023 10:43:00'],
  ['3105tjmg02.zip', '686.593', '01/06/2023 04:09:00'],
  ['31052023_GMF_ANEX...', '171.846', '01/06/2023 04:31:00'],
  ['31052023_GAPRE_ANE...', '17.668', '01/06/2023 04:31:00'],
  ['31052023_EJEF_ANEXO...', '26.701', '01/06/2023 04:31:00'],
  ['31052023_DEARHU_AN...', '12.002', '01/06/2023 04:31:00'],
  ['31052023_DEARHU_AN...', '267.249', '01/06/2023 04:31:00'],
  ['31052023_DEARHU_AN...', '15.651', '01/06/2023 04:31:00'],
  ['31052023_ASPREC_AN...', '3.927.929', '01/06/2023 04:31:00'],
  ['310510024.zip', '1.603.123', '01/06/2023 05:41:00'],
  ['3103tjmg02.zip', '634.822', '03/04/2023 04:12:00'],
  ['31032023_GAPRE_ANE...', '16.282', '03/04/2023 04:25:00'],
  ['31032023_EJEF_ANEXO...', '26.810', '03/04/2023 04:25:00'],
  ['31032023_DEARHU_AN...', '63.667', '03/04/2023 04:25:00'],
  ['31032023_ASPREC_AN...', '9.240.322', '03/04/2023 04:25:00'],
  ['310310024.zip', '1.725.824', '03/04/2023 08:00:00']
];
document.getElementById('remote-list').innerHTML =
  `<div class="rrow"><span>${icon('folder', 14)}..</span></div>` +
  remote.map(([name, size, date]) => {
    const zip = name.endsWith('.zip');
    return `<div class="rrow"><span>${icon(zip ? 'zip' : 'chrome')}${name}</span><span>${size}</span>` +
      `<span>${zip ? 'Arquivo ZI...' : 'Chrome H...'}</span><span>${date}</span><span>-rw-r--r--</span><span>1</span></div>`;
  }).join('');
```
